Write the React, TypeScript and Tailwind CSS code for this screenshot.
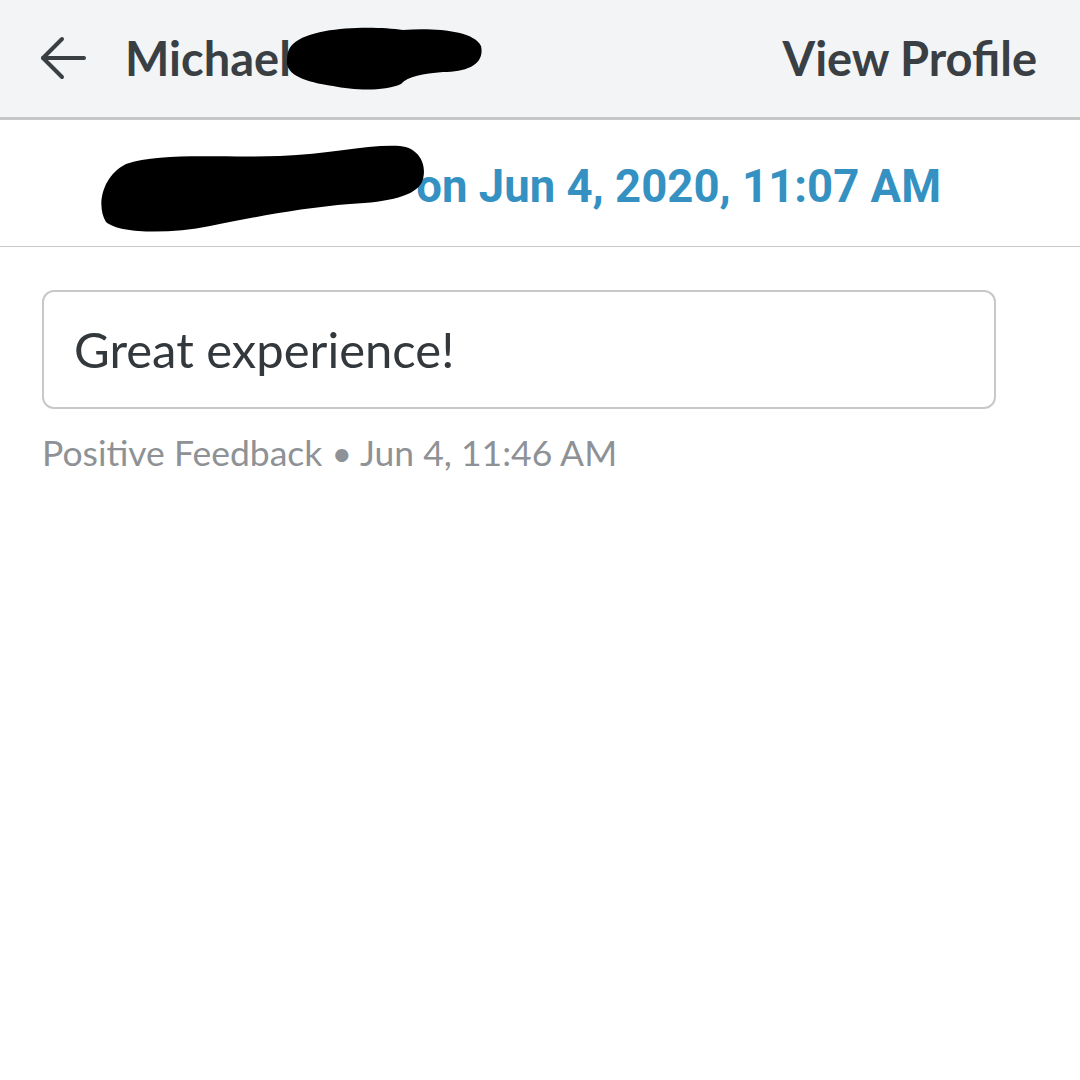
import React from "react";

export default function App() {
  return (
    <div className="w-[1080px] h-[1080px] bg-white overflow-hidden" style={{ fontFamily: "Lato, 'Open Sans', sans-serif" }}>
      <div className="relative h-[120px] bg-[#f3f4f6] border-b-[3px] border-[#c5c7c6] flex items-center pl-[38px] pr-[43px]">
        <svg width="50" height="50" viewBox="0 0 50 50" className="shrink-0" fill="none" stroke="#3a3f44" strokeWidth="4" strokeLinecap="round" strokeLinejoin="round">
          <path d="M46 24H5" />
          <path d="M24 5L5 24L24 43" />
        </svg>
        <span className="ml-[37px] text-[47px] font-bold text-[#3a3f44] leading-none">Michael</span>
        <span className="ml-auto text-[47px] font-bold text-[#3a3f44] leading-none">View Profile</span>
        <svg className="absolute left-[283px] top-[24px]" width="200" height="68" viewBox="0 0 200 68">
          <path d="M10 20 C 30 2, 90 2, 120 6 C 150 4, 190 6, 198 22 C 202 40, 185 48, 160 48 C 140 50, 125 52, 118 60 C 100 68, 70 66, 50 62 C 20 58, 2 50, 4 36 C 4 28, 6 24, 10 20 Z" fill="#000" />
        </svg>
      </div>
      <div className="relative h-[127px] border-b border-[#c9c9c9] flex items-center justify-end pr-[139px] pt-[8px]">
        <span className="text-[45.5px] font-bold text-[#3591c1] leading-none" style={{ fontFamily: "Roboto, sans-serif" }}>on Jun 4, 2020, 11:07 AM</span>
        <svg className="absolute left-[100px] top-[24px]" width="326" height="90" viewBox="0 0 326 90">
          <path d="M26 20 C 60 8, 120 14, 180 12 C 230 10, 270 0, 300 2 C 320 4, 328 22, 322 38 C 315 52, 290 58, 250 60 C 200 64, 150 74, 110 82 C 70 90, 20 90, 6 78 C -4 62, 2 32, 26 20 Z" fill="#000" />
        </svg>
      </div>
      <div className="px-[42px] pt-[43px]">
        <div className="w-[954px] h-[119px] border-2 border-[#c8c8c8] rounded-[12px] flex items-center px-[30px]">
          <span className="text-[49px] text-[#33383c] leading-none">Great experience!</span>
        </div>
        <div className="mt-[26px] text-[35.5px] text-[#8e9296] leading-none">Positive Feedback • Jun 4, 11:46 AM</div>
      </div>
    </div>
  );
}
